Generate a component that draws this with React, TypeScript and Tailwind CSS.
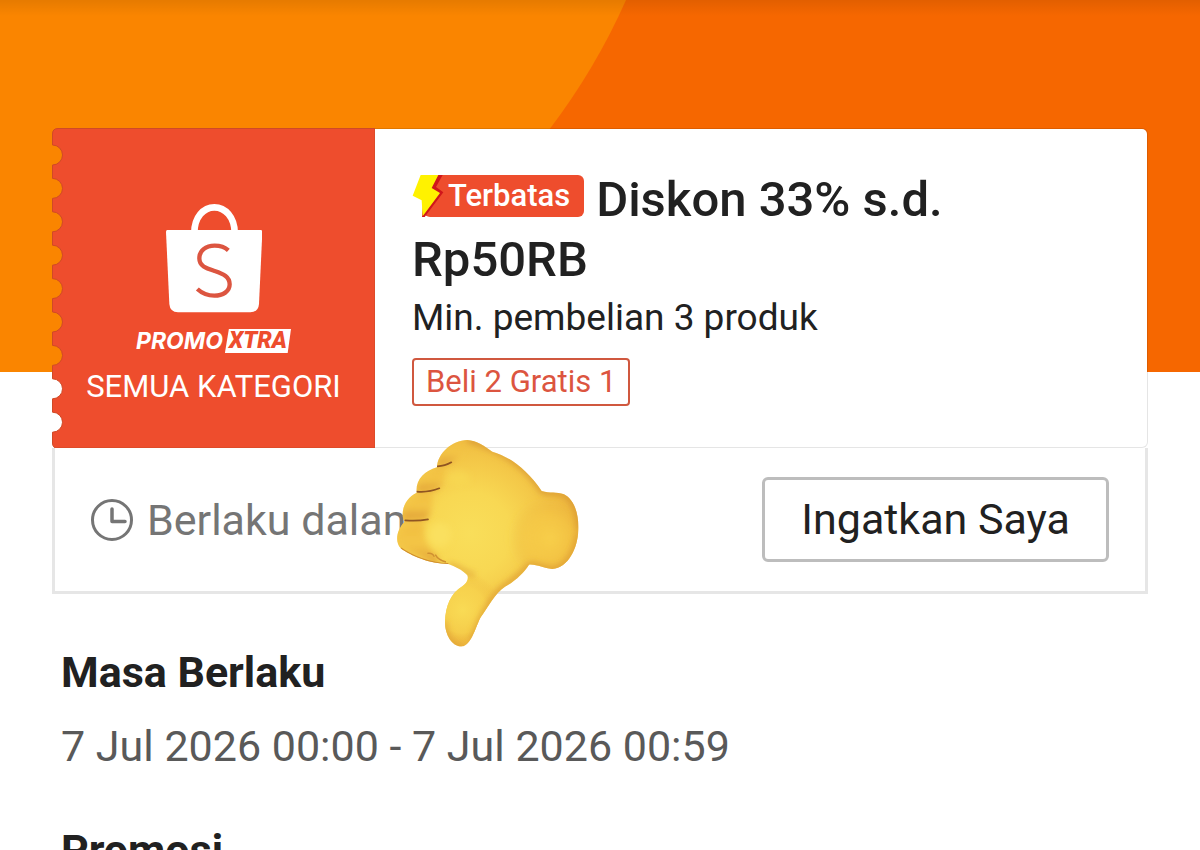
import { Fragment } from "react";

const STUB_W = 323;
const STUB_H = 320;
const NOTCHES = Array.from({ length: 9 }, (_, i) => 27 + i * 33.4);

const stubPath =
  "M6 0.5 Q0.5 0.5 0.5 6 " +
  NOTCHES.map((y) => `V${y - 10} A10 10 0 0 1 0.5 ${y + 10}`).join(" ") +
  ` V${STUB_H - 5} Q0.5 ${STUB_H} 5 ${STUB_H} H${STUB_W} V0.5 Z`;

const details = [
  { title: "Masa Berlaku", text: "7 Jul 2026 00:00 - 7 Jul 2026 00:59" },
  { title: "Promosi", text: "" },
];

function Banner() {
  return (
    <div className="relative h-[372px] overflow-hidden bg-[#f66700]">
      <svg className="h-full w-full" viewBox="0 0 1200 372" preserveAspectRatio="xMinYMin slice" aria-hidden="true">
        <path d="M0 0H626Q596 68 549 130Q450 260 300 372H0Z" fill="#fa8500" />
      </svg>
      <div className="absolute inset-x-0 top-0 h-4 bg-linear-to-b from-black/8 to-transparent" />
    </div>
  );
}

function BagLogo() {
  return (
    <svg className="h-[110px] w-24" viewBox="137 40 288 330" aria-hidden="true">
      <path d="M222 130C222 82 250 53 282 53C314 53 343 82 343 130" fill="none" stroke="#fff" strokeWidth="20" />
      <path d="M141 121H421Q426 121 426 127L416 343Q414 367 390 368H173Q149 367 147 343L137 127Q137 121 141 121Z" fill="#fff" />
      <path
        d="M324 182C314 173 299 168 283 168C256 168 237 183 237 206C237 230 258 236 283 244C310 253 328 261 328 284C328 305 308 318 282 318C262 318 244 310 231 298"
        fill="none"
        stroke="#dc5540"
        strokeWidth="13"
      />
    </svg>
  );
}

function Stub() {
  return (
    <div className="relative flex w-[323px] shrink-0 flex-col items-center pt-[75px]">
      <svg className="absolute inset-0 h-full w-full" viewBox={`0 0 ${STUB_W} ${STUB_H}`} preserveAspectRatio="none" aria-hidden="true">
        <path d={stubPath} fill="#ee4d2d" stroke="#cf4a26" strokeWidth="1" />
      </svg>
      <div className="relative flex flex-col items-center">
        <BagLogo />
        <div className="mt-4 flex h-6 items-center gap-0.5 leading-6">
          <span className="font-[Inter] text-[23px] font-bold text-white italic">PROMO</span>
          <span className="bg-white px-1 font-[Roboto] text-[23px] font-black text-[#ee4d2d] italic [clip-path:polygon(6%_0,100%_0,95%_100%,0_100%)]">
            XTRA
          </span>
        </div>
        <p className="mt-3.5 text-[31px] leading-10 text-white">SEMUA KATEGORI</p>
      </div>
    </div>
  );
}

function LimitedBadge() {
  return (
    <span className="relative mr-3 ml-3 inline-flex h-[42px] items-center rounded-md bg-[#ee4d2d] pr-3.5 pl-6 text-[31px] leading-10 text-white">
      <svg className="absolute top-0 -left-3 h-[42px] w-8" viewBox="0 0 96 126" aria-hidden="true">
        <path d="M30 0H40V126H30Z" fill="#fff" />
        <path d="M40 0H92L72 36L94 52L38 126H30Z" fill="#d0161b" />
        <path d="M26 0H79L59 39L84 54L32 124L29 76L2 62Z" fill="#fff200" />
      </svg>
      Terbatas
    </span>
  );
}

function Voucher() {
  return (
    <div className="flex min-h-[320px]">
      <Stub />
      <div className="flex-1 rounded-r-md border border-l-0 border-black/10 bg-white bg-clip-padding pt-[41px] pr-9 pl-[37px]">
        <h1 className="text-[49px] leading-[60px] font-medium">
          <span className="mb-[13px] inline-flex align-bottom">
            <LimitedBadge />
          </span>
          <span>Diskon 33% s.d. Rp50RB</span>
        </h1>
        <p className="text-[37px] leading-[56px]">Min. pembelian 3 produk</p>
        <span className="mt-3 inline-block rounded-sm border-2 border-[#d0583f] px-3 text-[31px] leading-[44px] text-[#dc5540]">
          Beli 2 Gratis 1
        </span>
      </div>
    </div>
  );
}

function ClockIcon() {
  return (
    <svg className="h-[42px] w-[42px] shrink-0" viewBox="0 0 42 42" fill="none" stroke="#757575" strokeWidth="3" aria-hidden="true">
      <circle cx="21" cy="21" r="19.5" />
      <path d="M21 10V22.5H34" strokeWidth="3.5" strokeLinecap="round" strokeLinejoin="round" />
    </svg>
  );
}

function ThumbDown() {
  return (
    <svg className="absolute -top-[18px] left-[325px] h-[230px] w-[220px]" viewBox="0 0 660 690" role="img" aria-label="Thumbs down">
      <defs>
        <radialGradient id="skin" gradientUnits="userSpaceOnUse" cx="270" cy="310" r="350">
          <stop offset="0" stopColor="#f9de5a" />
          <stop offset="0.35" stopColor="#f8d853" />
          <stop offset="0.62" stopColor="#f4c848" />
          <stop offset="1" stopColor="#ebb03b" />
        </radialGradient>
        <radialGradient id="wrist" gradientUnits="userSpaceOnUse" cx="510" cy="325" r="125">
          <stop offset="0" stopColor="#f8cf4a" />
          <stop offset="0.55" stopColor="#f5c644" stopOpacity="0.6" />
          <stop offset="1" stopColor="#e8ac38" stopOpacity="0" />
        </radialGradient>
        <radialGradient id="thumb" gradientUnits="userSpaceOnUse" cx="248" cy="540" r="115">
          <stop offset="0" stopColor="#f9db55" />
          <stop offset="0.6" stopColor="#f7d24d" stopOpacity="0.8" />
          <stop offset="1" stopColor="#edb83d" stopOpacity="0" />
        </radialGradient>
        <linearGradient id="finger" x1="0" y1="0" x2="0" y2="1">
          <stop offset="0" stopColor="#f1bd40" />
          <stop offset="0.5" stopColor="#f4c646" />
          <stop offset="1" stopColor="#dd9a34" />
        </linearGradient>
        <filter id="soft" x="-30%" y="-30%" width="160%" height="160%">
          <feGaussianBlur stdDeviation="10" />
        </filter>
        <filter id="crease" x="-20%" y="-80%" width="140%" height="260%">
          <feGaussianBlur stdDeviation="1.5" />
        </filter>
        <clipPath id="hand">
          <path d="M262 30C290 31 315 50 337 65C390 80 442 120 485 183C510 190 530 185 552 193C582 208 597 250 595 300C593 355 565 413 517 417C490 416 472 402 447 404C432 428 405 454 375 470C345 490 325 530 302 562C287 590 276 640 250 649C217 653 195 615 195 575C197 527 212 489 248 468C262 458 266 446 262 436C246 418 225 410 205 402C150 402 92 377 62 355C44 335 50 300 73 276C60 250 72 205 110 188C106 150 132 123 171 112C172 72 215 30 262 30Z" />
        </clipPath>
      </defs>
      <g clipPath="url(#hand)">
        <path d="M0 0H660V690H0Z" fill="url(#skin)" />
        <circle cx="510" cy="325" r="125" fill="url(#wrist)" filter="url(#soft)" />
        <circle cx="248" cy="540" r="115" fill="url(#thumb)" />
        <g filter="url(#soft)">
          <path d="M170 108C178 62 220 34 262 32C250 56 240 84 208 100Z" fill="url(#finger)" />
          <path d="M110 186C112 145 142 120 190 114C198 140 190 165 170 180Z" fill="url(#finger)" />
          <path d="M68 270C62 225 88 195 155 190C158 220 155 245 140 268Z" fill="url(#finger)" />
          <path d="M52 345C46 305 65 280 132 277C124 310 135 345 172 380L180 410Z" fill="url(#finger)" />
          <path d="M262 28C345 53 430 93 487 183C510 190 530 185 552 193C585 210 597 250 597 300" fill="none" stroke="#d79630" strokeWidth="14" />
          <path d="M595 310C590 355 565 415 517 419C490 418 472 402 447 406C418 442 385 460 355 484C325 522 302 560 275 635" fill="none" stroke="#dd9c30" strokeWidth="14" />
          <path d="M205 404C245 412 262 436 285 434" fill="none" stroke="#dd9f34" strokeWidth="10" />
          <path d="M193 575C195 620 218 652 245 652" fill="none" stroke="#dfa135" strokeWidth="12" />
        </g>
        <ellipse cx="180" cy="314" rx="34" ry="36" fill="#fae05f" filter="url(#soft)" />
        <ellipse cx="235" cy="145" rx="34" ry="22" fill="#f8d952" fillOpacity="0.7" filter="url(#soft)" />
        <path d="M62 355C92 377 150 402 205 402" fill="none" stroke="#cf8c2e" strokeWidth="6" filter="url(#crease)" />
        <path d="M142 370Q158 368 163 380M166 374Q174 390 198 396" fill="none" stroke="#cf9030" strokeWidth="4" filter="url(#crease)" />
        <g fill="none" stroke="#8f5420" strokeWidth="5" strokeLinecap="round" filter="url(#crease)">
          <path d="M172 109Q195 108 214 97" />
          <path d="M111 185Q146 188 178 175" />
          <path d="M76 271Q112 274 144 268" />
        </g>
      </g>
    </svg>
  );
}

export default function App() {
  return (
    <div className="h-screen overflow-hidden bg-white font-[Roboto,sans-serif] text-[#212121]">
      <Banner />
      <main className="relative -mt-[244px] px-[52px]">
        <Voucher />
        <section className="relative flex items-center justify-between border-3 border-t-0 border-[#e6e6e6] bg-white py-[29px] pr-9 pl-9">
          <div className="flex items-center gap-3.5 text-[43px] leading-[60px] text-[#757575]">
            <ClockIcon />
            <span>Berlaku dalam</span>
          </div>
          <button type="button" className="rounded-md border-3 border-[#bdbdbd] px-9 py-2 text-[43px] leading-[63px]">
            Ingatkan Saya
          </button>
          <ThumbDown />
        </section>

        <dl className="mt-12 px-[9px] text-[43px] leading-[60px]">
          {details.map((d) => (
            <Fragment key={d.title}>
              <dt className="font-bold">{d.title}</dt>
              <dd className="mt-3.5 mb-11 text-[#595959]">{d.text}</dd>
            </Fragment>
          ))}
        </dl>
      </main>
    </div>
  );
}
